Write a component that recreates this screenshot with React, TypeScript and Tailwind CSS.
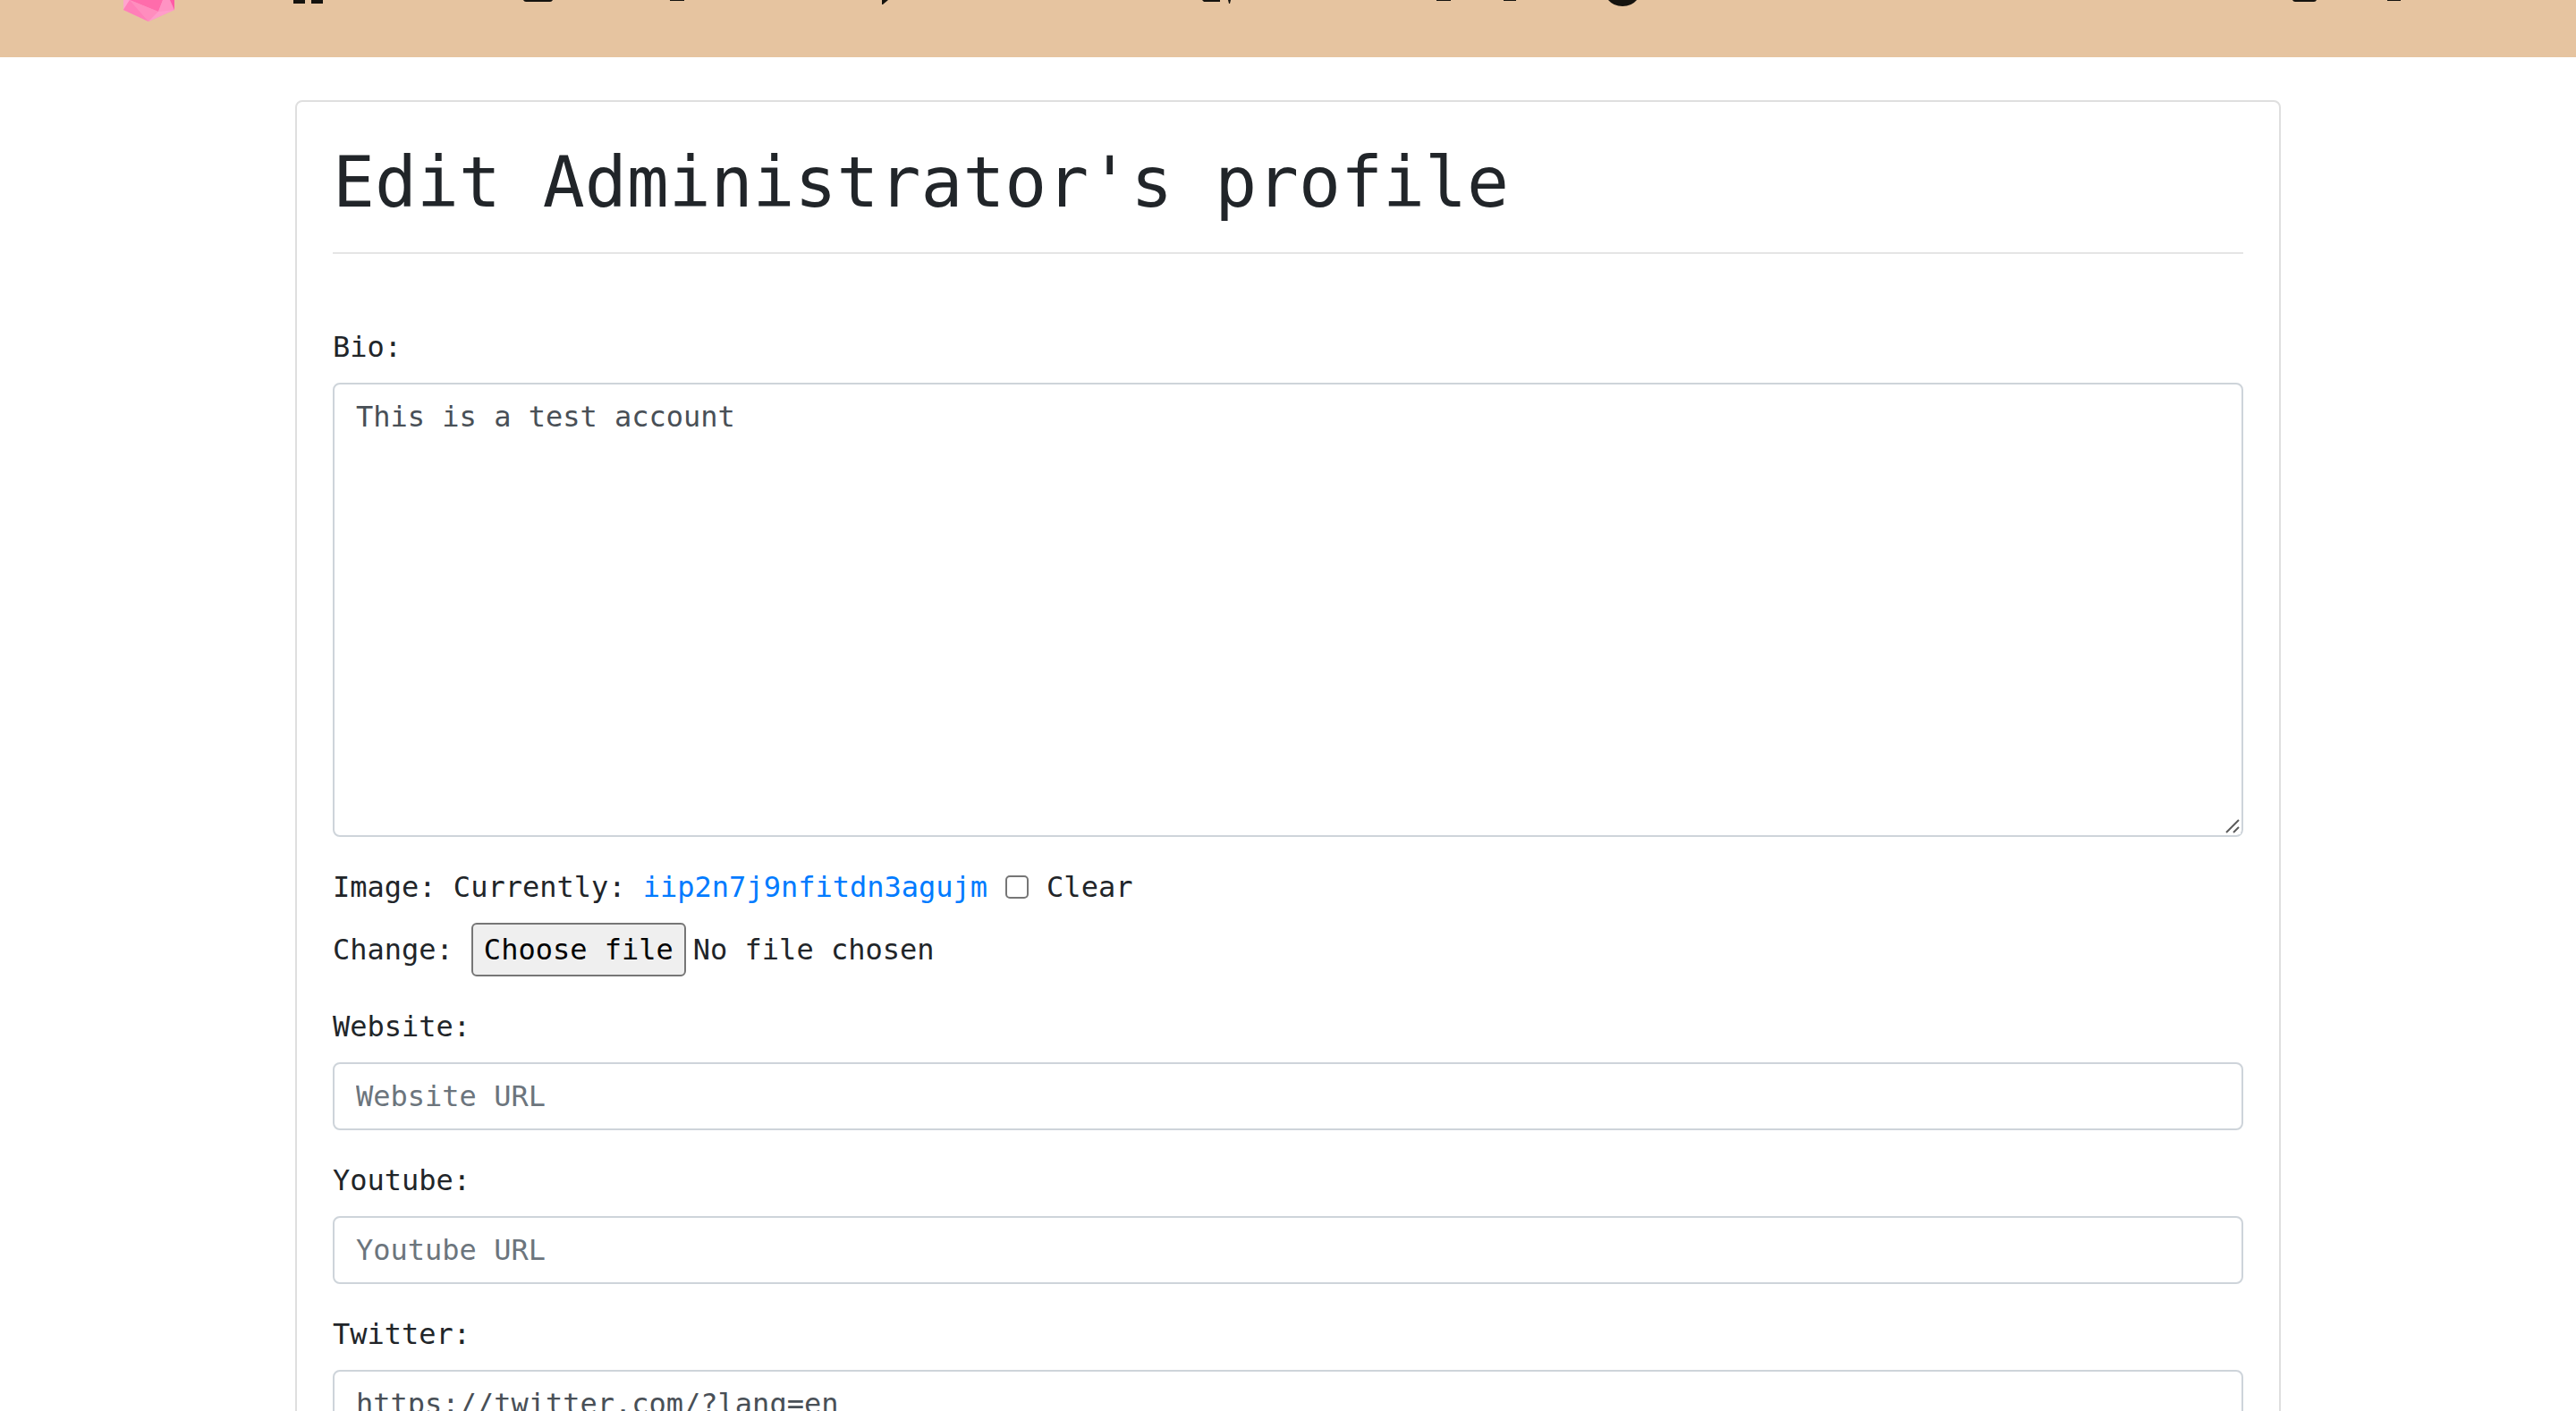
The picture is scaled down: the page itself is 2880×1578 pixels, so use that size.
import { useRef, useState } from "react";

const ink = "#15130f";

const navIcons = [
  { name: "Feed", place: "ml-[133px]", width: 33, shape: "M0 0H13V4H0ZM20 0H33V4H20Z" },
  { name: "Messages", place: "ml-[224px]", width: 33, shape: "M0 0H33Q32 2 30 2H3Q1 2 0 0Z" },
  { name: "Saved", place: "ml-[131px]", width: 16, shape: "M0 0H16V1H0Z" },
  { name: "Chat", place: "ml-[221px]", width: 7, shape: "M0 0H7L1 5H0Z" },
  { name: "Groups", place: "ml-[351px]", width: 32, shape: "M0 0H20V2H2ZM29 0H32L31 4H30Z" },
  { name: "Events", place: "ml-[230px]", width: 16, shape: "M0 0H16V1H0Z" },
  { name: "Market", place: "ml-[59px]", width: 14, shape: "M0 0H14V1H0Z" },
  { name: "Help", place: "ml-[103px]", width: 32, shape: "M0 0H32Q26 7 16 7Q6 7 0 0Z" },
];

const accountIcons = [
  { name: "Account", place: "", width: 27, shape: "M0 0H27Q26 2 24 2H3Q1 2 0 0Z" },
  { name: "Log out", place: "ml-[79px]", width: 15, shape: "M0 0H15V1H0Z" },
];

type Icon = { name: string; place: string; width: number; shape: string };

function NavIcon({ name, place, width, shape }: Icon) {
  return (
    <a href="#" aria-label={name} className={`block shrink-0 ${place}`}>
      <svg width={width} height="8" viewBox={`0 0 ${width} 8`}>
        <path d={shape} fill={ink} />
      </svg>
    </a>
  );
}

function Gem() {
  return (
    <svg width="57" height="24" viewBox="0 0 57 24">
      <path d="M0 0H57V11L28 24L0 11Z" fill="#ff8ec0" />
      <path d="M0 0H7L0 11Z" fill="#ffa5cd" />
      <path d="M7 0H44L39 13Z" fill="#ff6cab" />
      <path d="M7 0L0 11L28 24Z" fill="#ff7fb8" />
      <path d="M7 0L39 13L28 24Z" fill="#ff8dbe" />
      <path d="M44 0H52L57 11L39 13Z" fill="#ff93c3" />
      <path d="M52 0H57V11Z" fill="#ff5ca5" />
      <path d="M39 13L57 11L28 24Z" fill="#ff9dca" />
    </svg>
  );
}

const fieldClass =
  "block w-full rounded-lg border-2 border-[#ced4da] bg-white px-[24px] py-3 text-[#495057] outline-none placeholder:text-[#6c757d] placeholder:opacity-100";

function UrlField({ id, label, value }: { id: string; label: string; value?: string }) {
  return (
    <div className="mb-8">
      <label htmlFor={id} className="mb-4 block">
        {label}:
      </label>
      <input id={id} type="text" placeholder={`${label} URL`} defaultValue={value} className={fieldClass} />
    </div>
  );
}

export default function App() {
  const fileRef = useRef<HTMLInputElement>(null);
  const [fileName, setFileName] = useState("No file chosen");

  return (
    <div className="h-screen overflow-hidden bg-white font-['DejaVu_Sans_Mono',monospace] text-[32px] leading-[48px] text-[#212529]">
      <header className="flex h-16 items-start bg-[#e6c4a0] pr-[196px] pl-[138px]">
        <a href="#" aria-label="Home" className="block shrink-0">
          <Gem />
        </a>
        <nav className="flex flex-1">
          {navIcons.map((icon) => (
            <NavIcon key={icon.name} {...icon} />
          ))}
        </nav>
        <div className="flex">
          {accountIcons.map((icon) => (
            <NavIcon key={icon.name} {...icon} />
          ))}
        </div>
      </header>

      <main className="mx-auto mt-12 max-w-[2220px] rounded-lg border-2 border-[#dfdfdf] bg-white p-10">
        <h1 className="text-[78px] leading-[100px]">Edit Administrator's profile</h1>
        <hr className="mt-7 mb-20 border-t-2 border-[#e5e5e5]" />
        <form>
          <div className="mb-8">
            <label htmlFor="bio" className="mb-4 block">
              Bio:
            </label>
            <div className="relative">
              <textarea id="bio" rows={10} defaultValue="This is a test account" className={fieldClass} />
              <svg
                className="pointer-events-none absolute right-[3px] bottom-[3px] bg-white"
                width="17"
                height="17"
                viewBox="0 0 17 17"
                fill="none"
                stroke="#5c5c5c"
                strokeWidth="2"
              >
                <path d="M1 15L15 1M9 15L15 9" />
              </svg>
            </div>
          </div>

          <div className="mb-8">
            <div className="mb-4 flex items-center">
              <span className="whitespace-pre">Image: Currently: </span>
              <a href="#" className="text-[#007bff]">
                iip2n7j9nfitdn3agujm
              </a>
              <input
                id="clear"
                type="checkbox"
                className="mx-5 size-[26px] appearance-none rounded-[5px] border-2 border-[#767676] bg-white checked:bg-[#007bff]"
              />
              <label htmlFor="clear">Clear</label>
            </div>
            <div className="flex items-center">
              <label htmlFor="file" className="mr-5">
                Change:
              </label>
              <input
                ref={fileRef}
                id="file"
                type="file"
                className="hidden"
                onChange={(e) => setFileName(e.target.files?.[0]?.name ?? "No file chosen")}
              />
              <button
                type="button"
                onClick={() => fileRef.current?.click()}
                className="mr-2 rounded-md border-2 border-[#767676] bg-[#efefef] px-3 py-1 text-black"
              >
                Choose file
              </button>
              <span>{fileName}</span>
            </div>
          </div>

          <UrlField id="website" label="Website" />
          <UrlField id="youtube" label="Youtube" />
          <UrlField id="twitter" label="Twitter" value="https://twitter.com/?lang=en" />
        </form>
      </main>
    </div>
  );
}
